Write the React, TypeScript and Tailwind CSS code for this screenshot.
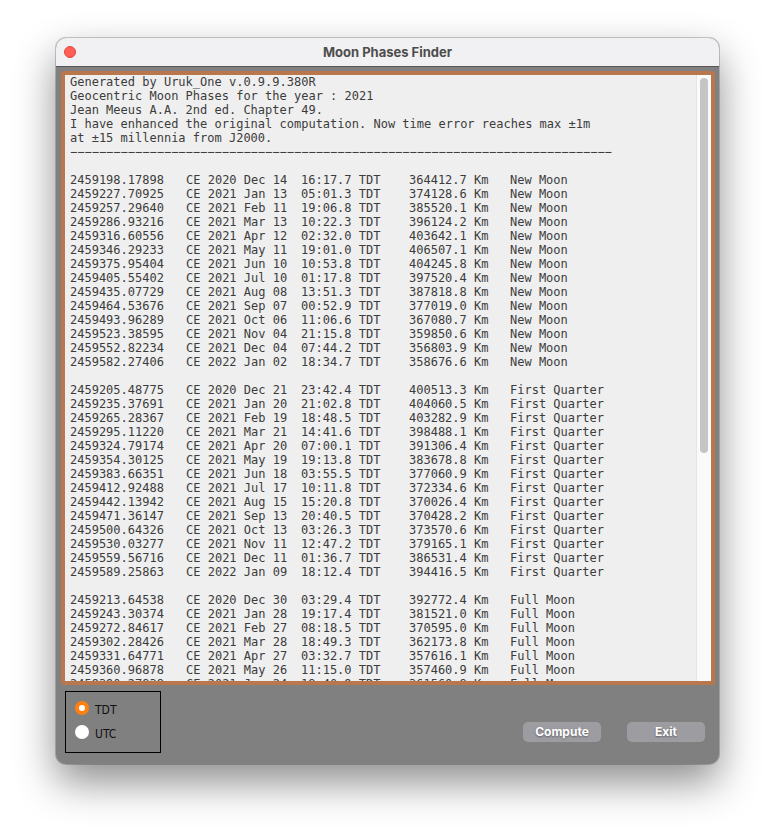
import { useState } from "react";

const INTRO = [
  "Generated by Uruk_One v.0.9.9.380R",
  "Geocentric Moon Phases for the year : 2021",
  "Jean Meeus A.A. 2nd ed. Chapter 49.",
  "I have enhanced the original computation. Now time error reaches max ±1m",
  "at ±15 millennia from J2000.",
];

// julian day, date, time, distance
const PHASES = [
  {
    name: "New Moon",
    rows: [
      ["2459198.17898", "2020 Dec 14", "16:17.7", "364412.7"],
      ["2459227.70925", "2021 Jan 13", "05:01.3", "374128.6"],
      ["2459257.29640", "2021 Feb 11", "19:06.8", "385520.1"],
      ["2459286.93216", "2021 Mar 13", "10:22.3", "396124.2"],
      ["2459316.60556", "2021 Apr 12", "02:32.0", "403642.1"],
      ["2459346.29233", "2021 May 11", "19:01.0", "406507.1"],
      ["2459375.95404", "2021 Jun 10", "10:53.8", "404245.8"],
      ["2459405.55402", "2021 Jul 10", "01:17.8", "397520.4"],
      ["2459435.07729", "2021 Aug 08", "13:51.3", "387818.8"],
      ["2459464.53676", "2021 Sep 07", "00:52.9", "377019.0"],
      ["2459493.96289", "2021 Oct 06", "11:06.6", "367080.7"],
      ["2459523.38595", "2021 Nov 04", "21:15.8", "359850.6"],
      ["2459552.82234", "2021 Dec 04", "07:44.2", "356803.9"],
      ["2459582.27406", "2022 Jan 02", "18:34.7", "358676.6"],
    ],
  },
  {
    name: "First Quarter",
    rows: [
      ["2459205.48775", "2020 Dec 21", "23:42.4", "400513.3"],
      ["2459235.37691", "2021 Jan 20", "21:02.8", "404060.5"],
      ["2459265.28367", "2021 Feb 19", "18:48.5", "403282.9"],
      ["2459295.11220", "2021 Mar 21", "14:41.6", "398488.1"],
      ["2459324.79174", "2021 Apr 20", "07:00.1", "391306.4"],
      ["2459354.30125", "2021 May 19", "19:13.8", "383678.8"],
      ["2459383.66351", "2021 Jun 18", "03:55.5", "377060.9"],
      ["2459412.92488", "2021 Jul 17", "10:11.8", "372334.6"],
      ["2459442.13942", "2021 Aug 15", "15:20.8", "370026.4"],
      ["2459471.36147", "2021 Sep 13", "20:40.5", "370428.2"],
      ["2459500.64326", "2021 Oct 13", "03:26.3", "373570.6"],
      ["2459530.03277", "2021 Nov 11", "12:47.2", "379165.1"],
      ["2459559.56716", "2021 Dec 11", "01:36.7", "386531.4"],
      ["2459589.25863", "2022 Jan 09", "18:12.4", "394416.5"],
    ],
  },
  {
    name: "Full Moon",
    rows: [
      ["2459213.64538", "2020 Dec 30", "03:29.4", "392772.4"],
      ["2459243.30374", "2021 Jan 28", "19:17.4", "381521.0"],
      ["2459272.84617", "2021 Feb 27", "08:18.5", "370595.0"],
      ["2459302.28426", "2021 Mar 28", "18:49.3", "362173.8"],
      ["2459331.64771", "2021 Apr 27", "03:32.7", "357616.1"],
      ["2459360.96878", "2021 May 26", "11:15.0", "357460.9"],
      ["2459390.27838", "2021 Jun 24", "18:40.9", "361560.8"],
    ],
  },
];

const SCALES = ["TDT", "UTC"];

function TitleBar() {
  return (
    <header className="grid h-[29px] shrink-0 grid-cols-[1fr_auto_1fr] items-center border-b border-[#555555] bg-[#f1f1f3] px-2">
      <button
        type="button"
        aria-label="Close"
        className="size-3 rounded-full border border-[#e2463f] bg-[#ff5f57]"
      />
      <h1 className="font-['Inter',sans-serif] text-[13px] leading-4 font-bold text-[#4d4d4d]">
        Moon Phases Finder
      </h1>
    </header>
  );
}

function Report() {
  return (
    <div className="flex min-h-0 flex-1 rounded-[3px] border-4 border-[#b9774e] bg-[#efefef]">
      <div className="min-w-0 flex-1 overflow-auto pl-[5px] font-['DejaVu_Sans_Mono',monospace] text-[12px] leading-[14px] whitespace-pre text-[#3c3c3c] [scrollbar-width:none]">
        {INTRO.map((line) => (
          <p key={line}>{line}</p>
        ))}
        <p>{"−".repeat(75)}</p>
        <table className="table-fixed border-collapse">
          <colgroup>
            <col className="w-[116px]" />
            <col className="w-[115px]" />
            <col className="w-[108px]" />
            <col className="w-[101px]" />
            <col className="w-[100px]" />
          </colgroup>
          {PHASES.map((phase) => (
            <tbody key={phase.name}>
              <tr className="h-[14px]">
                <td colSpan={5} />
              </tr>
              {phase.rows.map(([jd, date, time, distance]) => (
                <tr key={jd}>
                  <td className="p-0">{jd}</td>
                  <td className="p-0">CE {date}</td>
                  <td className="p-0">{time} TDT</td>
                  <td className="p-0">{distance} Km</td>
                  <td className="p-0">{phase.name}</td>
                </tr>
              ))}
            </tbody>
          ))}
        </table>
      </div>
      <div className="w-[15px] shrink-0 border-l border-[#e5e5e5] bg-[#fafafa] px-[3px] py-[3px]">
        <div className="h-[62.5%] w-2 rounded-full bg-[#c5c5c5]" />
      </div>
    </div>
  );
}

function Controls() {
  const [scale, setScale] = useState("TDT");

  return (
    <footer className="flex shrink-0 items-start justify-between pt-1.5 pr-2.5 pb-[11px] pl-1">
      <fieldset className="flex h-[62px] w-24 flex-col gap-2 border border-black pt-2 pl-[9px]">
        {SCALES.map((item) => (
          <label
            key={item}
            className="flex h-4 items-center gap-1.5 font-['DejaVu_Sans_Condensed','DejaVu_Sans',sans-serif] text-[12px] leading-4 text-[#111111]"
          >
            <input
              type="radio"
              name="scale"
              value={item}
              checked={scale === item}
              onChange={() => setScale(item)}
              className="size-[14px] appearance-none rounded-full bg-white checked:border-4 checked:border-[#ff8210]"
            />
            <span className="pt-[3px]">{item}</span>
          </label>
        ))}
      </fieldset>
      <div className="flex gap-[26px] pt-[31px]">
        {["Compute", "Exit"].map((label) => (
          <button
            key={label}
            type="button"
            className="h-5 w-[78px] rounded-[5px] bg-[#9d9ca1] font-['Inter',sans-serif] text-[12px] leading-5 font-bold text-white [text-shadow:0_1px_2px_rgba(0,0,0,0.4)]"
          >
            {label}
          </button>
        ))}
      </div>
    </footer>
  );
}

export default function App() {
  return (
    <div className="flex h-screen flex-col bg-white px-14 pt-[38px] pb-[74px]">
      <main className="flex min-h-0 flex-1 flex-col overflow-hidden rounded-[10px] bg-[#808080] shadow-[0_0_0_1px_rgba(0,0,0,0.2),0_18px_40px_rgba(0,0,0,0.45)]">
        <TitleBar />
        <div className="flex min-h-0 flex-1 flex-col pt-1 pr-1 pl-[5px]">
          <Report />
          <Controls />
        </div>
      </main>
    </div>
  );
}
